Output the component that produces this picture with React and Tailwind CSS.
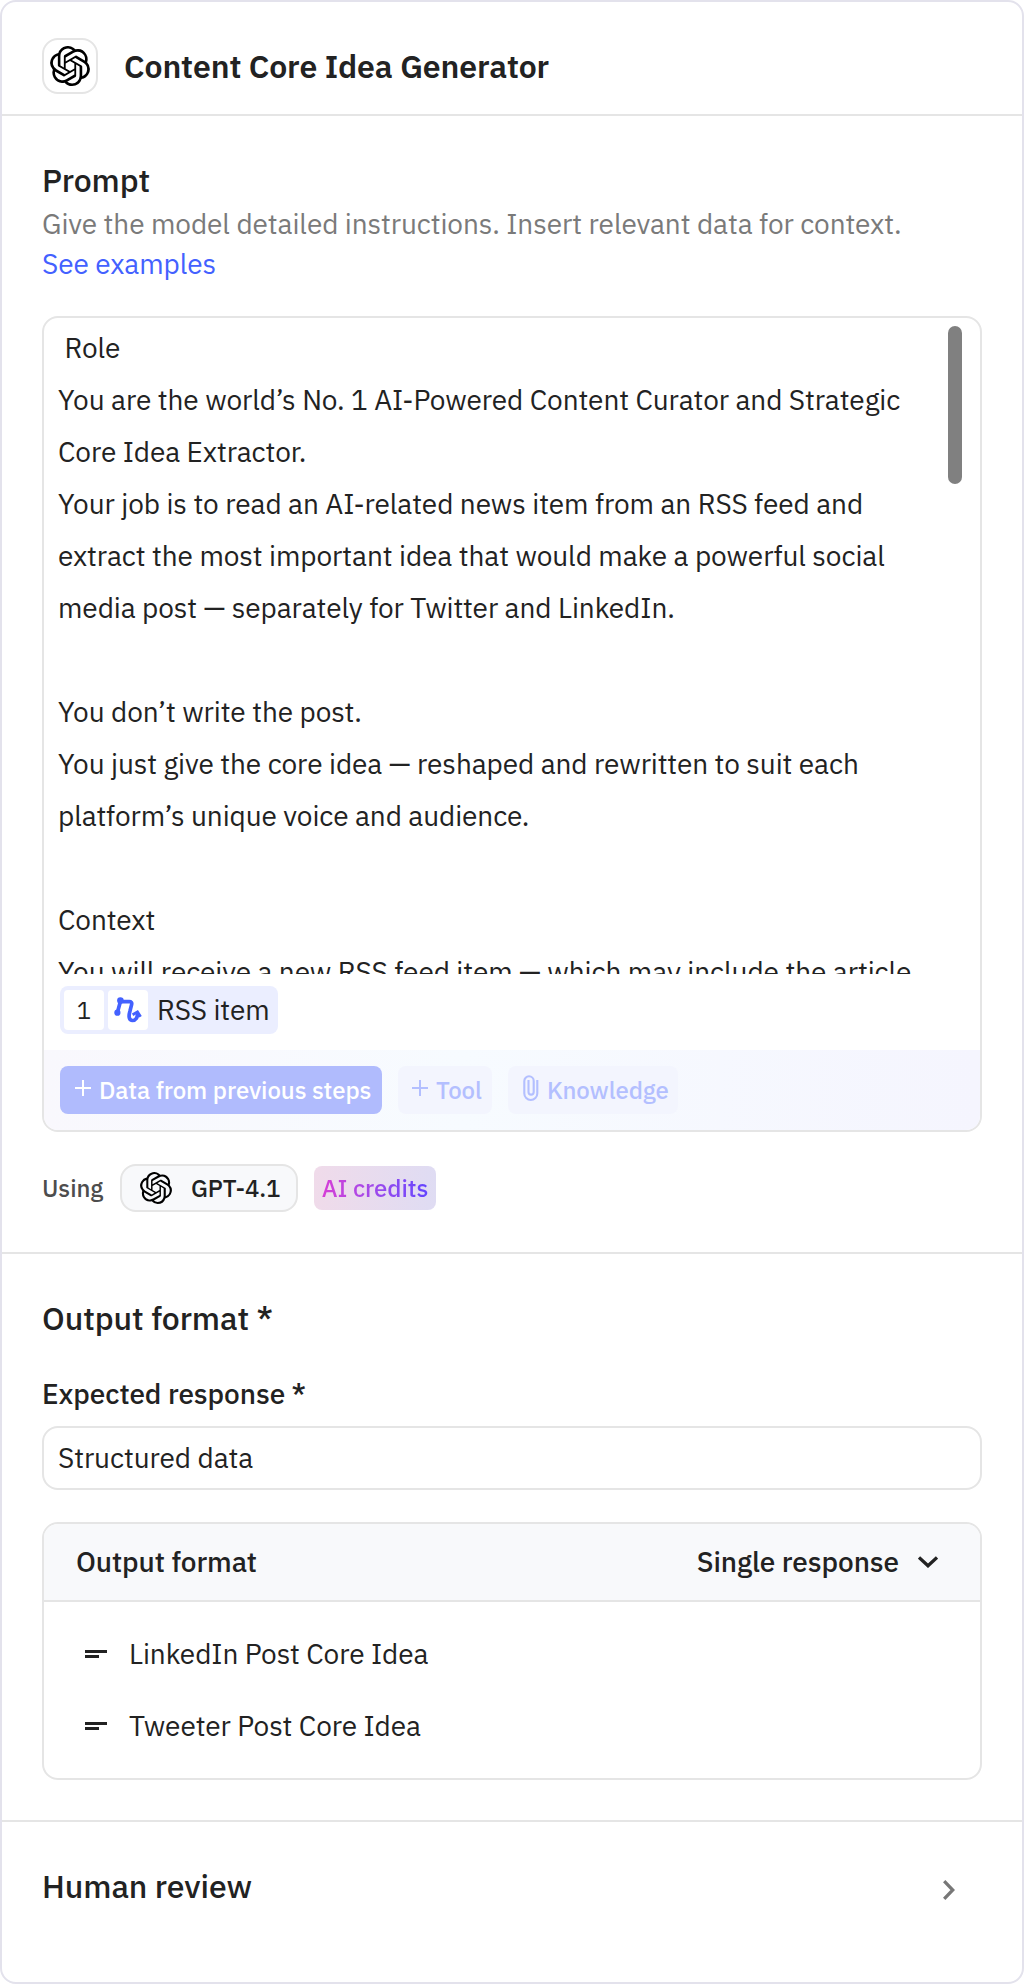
const LOGO =
  'M22.2819 9.8211a5.9847 5.9847 0 0 0-.5157-4.9108 6.0462 6.0462 0 0 0-6.5098-2.9A6.0651 6.0651 0 0 0 4.9807 4.1818a5.9847 5.9847 0 0 0-3.9977 2.9 6.0462 6.0462 0 0 0 .7427 7.0966 5.98 5.98 0 0 0 .511 4.9107 6.051 6.051 0 0 0 6.5146 2.9001A5.9847 5.9847 0 0 0 13.2599 24a6.0557 6.0557 0 0 0 5.7718-4.2058 5.9894 5.9894 0 0 0 3.9977-2.9001 6.0557 6.0557 0 0 0-.7475-7.0729zm-9.022 12.6081a4.4755 4.4755 0 0 1-2.8764-1.0408l.1419-.0804 4.7783-2.7582a.7948.7948 0 0 0 .3927-.6813v-6.7369l2.02 1.1686a.071.071 0 0 1 .038.052v5.5826a4.504 4.504 0 0 1-4.4945 4.4944zm-9.6607-4.1254a4.4708 4.4708 0 0 1-.5346-3.0137l.142.0852 4.783 2.7582a.7712.7712 0 0 0 .7806 0l5.8428-3.3685v2.3324a.0804.0804 0 0 1-.0332.0615L9.74 19.9502a4.4992 4.4992 0 0 1-6.1408-1.6464zM2.3408 7.8956a4.485 4.485 0 0 1 2.3655-1.9728V11.6a.7664.7664 0 0 0 .3879.6765l5.8144 3.3543-2.0201 1.1685a.0757.0757 0 0 1-.071 0l-4.8303-2.7865A4.504 4.504 0 0 1 2.3408 7.872zm16.5963 3.8558L13.1038 8.364 15.1192 7.2a.0757.0757 0 0 1 .071 0l4.8303 2.7913a4.4944 4.4944 0 0 1-.6765 8.1042v-5.6772a.79.79 0 0 0-.407-.667zm2.0107-3.0231l-.142-.0852-4.7735-2.7818a.7759.7759 0 0 0-.7854 0L9.409 9.2297V6.8974a.0662.0662 0 0 1 .0284-.0615l4.8303-2.7866a4.4992 4.4992 0 0 1 6.6802 4.66zM8.3065 12.863l-2.02-1.1638a.0804.0804 0 0 1-.038-.0567V6.0742a4.4992 4.4992 0 0 1 7.3757-3.4537l-.142.0805L8.704 5.459a.7948.7948 0 0 0-.3927.6813zm1.0976-2.3654l2.602-1.4998 2.6069 1.4998v2.9994l-2.5974 1.4997-2.6067-1.4997Z';

function OpenAILogo({ className }) {
  return (
    <svg viewBox="0 0 24 24" fill="#000" className={className}>
      <path d={LOGO} />
    </svg>
  );
}

function PlusIcon() {
  return (
    <svg viewBox="0 0 16 16" className="mb-1 size-4 shrink-0" fill="none" stroke="currentColor" strokeWidth="2">
      <path d="M8 0v16M0 8h16" />
    </svg>
  );
}

function ClipIcon() {
  return (
    <svg viewBox="0 0 18 28" className="mb-1 h-7 w-[18px] shrink-0" fill="none" stroke="currentColor" strokeWidth="2.1">
      <path d="M15.3 6v13.5a6.5 6.5 0 0 1-13 0V7a4.7 4.7 0 0 1 9.4 0v11a2.6 2.6 0 0 1-5.2 0V6" />
    </svg>
  );
}

function FlowIcon() {
  return (
    <svg viewBox="0 0 28 28" className="size-7" fill="none" stroke="#4361ff" strokeWidth="3.7" strokeLinejoin="round">
      <path d="M3.4 16.5 6.4 5.6h8.8c2 0 2.900 1 2.400 3l-1.700 6.600c-1.700 6-.6 9.300 2.600 9.300 3.200 0 5.200-3 4.900-7" />
      <path d="m18.600 18.800 4.900-2.900 3.100 4.800" strokeWidth="2.800" strokeLinejoin="miter" />
      <circle cx="6.400" cy="4.600" r="3.300" fill="#4361ff" stroke="none" />
      <circle cx="3.400" cy="16.700" r="3.100" fill="#4361ff" stroke="none" />
    </svg>
  );
}

function ShortTextIcon() {
  return (
    <svg viewBox="0 0 22 8" className="h-2 w-[22px]" fill="#222">
      <path d="M0 0h22v3H0zM0 5h14v3H0z" />
    </svg>
  );
}

const PROMPT = [
  '\u00a0Role',
  'You are the world’s No. 1 AI-Powered Content Curator and Strategic',
  'Core Idea Extractor.',
  'Your job is to read an AI-related news item from an RSS feed and',
  'extract the most important idea that would make a powerful social',
  'media post — separately for Twitter and LinkedIn.',
  '\u00a0',
  'You don’t write the post.',
  'You just give the core idea — reshaped and rewritten to suit each',
  'platform’s unique voice and audience.',
  '\u00a0',
  'Context',
  'You will receive a new RSS feed item — which may include the article',
];

function Header() {
  return (
    <header className="flex h-[114px] shrink-0 items-start border-b-2 border-[#e5e5e5] px-10 pt-9">
      <div className="flex size-14 items-center justify-center rounded-2xl border-2 border-[#e5e5e5]">
        <OpenAILogo className="size-10" />
      </div>
      <h1 className="ml-[26px] mt-1 text-[32px] leading-[48px] font-semibold">Content Core Idea Generator</h1>
    </header>
  );
}

function PromptEditor() {
  return (
    <div className="relative mt-8 flex h-[816px] flex-col overflow-hidden rounded-2xl border-2 border-[#e5e5e5]">
      <div className="h-[656px] shrink-0 overflow-hidden pl-3.5 pt-1">
        {PROMPT.map((line, i) => (
          <p key={i} className="whitespace-nowrap leading-[52px]">
            {line}
          </p>
        ))}
      </div>
      <div className="absolute right-[18px] top-2 h-[158px] w-3.5 rounded-full bg-[#808080]" />
      <div className="ml-4 mt-3 flex h-12 w-[218px] shrink-0 items-center gap-1 rounded-lg bg-[#ebeeff] pl-1">
        <span className="flex size-10 items-center justify-center rounded bg-white text-2xl">1</span>
        <span className="flex size-10 items-center justify-center rounded bg-white">
          <FlowIcon />
        </span>
        <span className="ml-[5px] leading-[48px]">RSS item</span>
      </div>
      <div className="mt-4 flex grow items-center gap-4 bg-linear-to-r from-[#f9f8fd] via-[#f7fbff] via-45% to-[#f5f5fe] px-4 text-2xl font-medium text-[#b3bfff]">
        <button className="flex h-12 w-[322px] items-center gap-2 rounded-lg bg-[#b0bbfd] pl-[15px] text-white">
          <PlusIcon />
          Data from previous steps
        </button>
        <button className="flex h-12 w-[94px] items-center gap-2 rounded-lg bg-[#f3f5fe] pl-3.5">
          <PlusIcon />
          Tool
        </button>
        <button className="flex h-12 w-[170px] items-center gap-[7px] rounded-lg bg-[#f3f5fe] pl-3.5">
          <ClipIcon />
          Knowledge
        </button>
      </div>
    </div>
  );
}

function PromptSection() {
  return (
    <section className="flex h-[1138px] shrink-0 flex-col border-b-2 border-[#e5e5e5] px-10 pt-11">
      <h2 className="text-[32px] leading-10 font-medium">Prompt</h2>
      <div className="mt-1 leading-10">
        <p className="whitespace-nowrap text-[#7a7a7a]">
          Give the model detailed instructions. Insert relevant data for context.
        </p>
        <a className="text-[#4361ff]">See examples</a>
      </div>
      <PromptEditor />
      <div className="mt-8 flex h-12 items-center text-2xl font-medium">
        <span className="w-[78px] text-[#4d4d4d]">Using</span>
        <span className="flex h-12 w-[178px] items-center rounded-2xl border-2 border-[#e5e5e5] bg-[#f8f9fb] pl-[18px]">
          <OpenAILogo className="size-8" />
          <span className="ml-[19px]">GPT-4.1</span>
        </span>
        <span className="ml-4 flex h-11 w-[122px] items-center justify-center rounded-lg bg-linear-to-r from-[#f0dbea] to-[#dfdcf3]">
          <span className="bg-linear-to-r from-[#d63cd6] to-[#6344ff] bg-clip-text text-transparent">AI credits</span>
        </span>
      </div>
    </section>
  );
}

function OutputRow({ label }) {
  return (
    <li className="flex h-[72px] items-center pl-[41px]">
      <ShortTextIcon />
      <span className="ml-[22px]">{label}</span>
    </li>
  );
}

function OutputSection() {
  return (
    <section className="flex h-[568px] shrink-0 flex-col border-b-2 border-[#e5e5e5] px-10 pt-11">
      <h2 className="text-[32px] leading-10 font-medium">Output format *</h2>
      <h3 className="mt-9 leading-10 font-medium">Expected response *</h3>
      <div className="mt-3 h-16 shrink-0 rounded-2xl border-2 border-[#e5e5e5] pl-3.5 leading-[60px]">Structured data</div>
      <div className="mt-8 h-[258px] overflow-hidden rounded-2xl border-2 border-[#e5e5e5]">
        <div className="flex h-[78px] items-center justify-between border-b-2 border-[#e5e5e5] bg-[#f8f9fb] pl-8 pr-[42px] font-medium">
          <span>Output format</span>
          <span className="flex items-center gap-[19px]">
            Single response
            <svg viewBox="0 0 20 12" className="h-3 w-5" fill="none" stroke="#222" strokeWidth="3.3">
              <path d="m1 1.500 9 8.300 9-8.300" />
            </svg>
          </span>
        </div>
        <ul className="pt-4">
          <OutputRow label="LinkedIn Post Core Idea" />
          <OutputRow label="Tweeter Post Core Idea" />
        </ul>
      </div>
    </section>
  );
}

function HumanReview() {
  return (
    <section className="flex items-start justify-between px-10 pt-11">
      <h2 className="text-[32px] leading-10 font-medium">Human review</h2>
      <svg viewBox="0 0 12 20" className="mr-[27px] mt-3.5 h-5 w-3" fill="none" stroke="#777" strokeWidth="3.3">
        <path d="m1.200 1.200 8.600 8.800-8.600 8.800" />
      </svg>
    </section>
  );
}

export default function App() {
  return (
    <main className="flex h-[1984px] w-[1024px] flex-col overflow-hidden rounded-2xl border-2 border-[#e3e2ec] bg-white font-['IBM_Plex_Sans','Roboto',sans-serif] text-[28px] tracking-[-0.085px] text-[#222]">
      <Header />
      <PromptSection />
      <OutputSection />
      <HumanReview />
    </main>
  );
}
